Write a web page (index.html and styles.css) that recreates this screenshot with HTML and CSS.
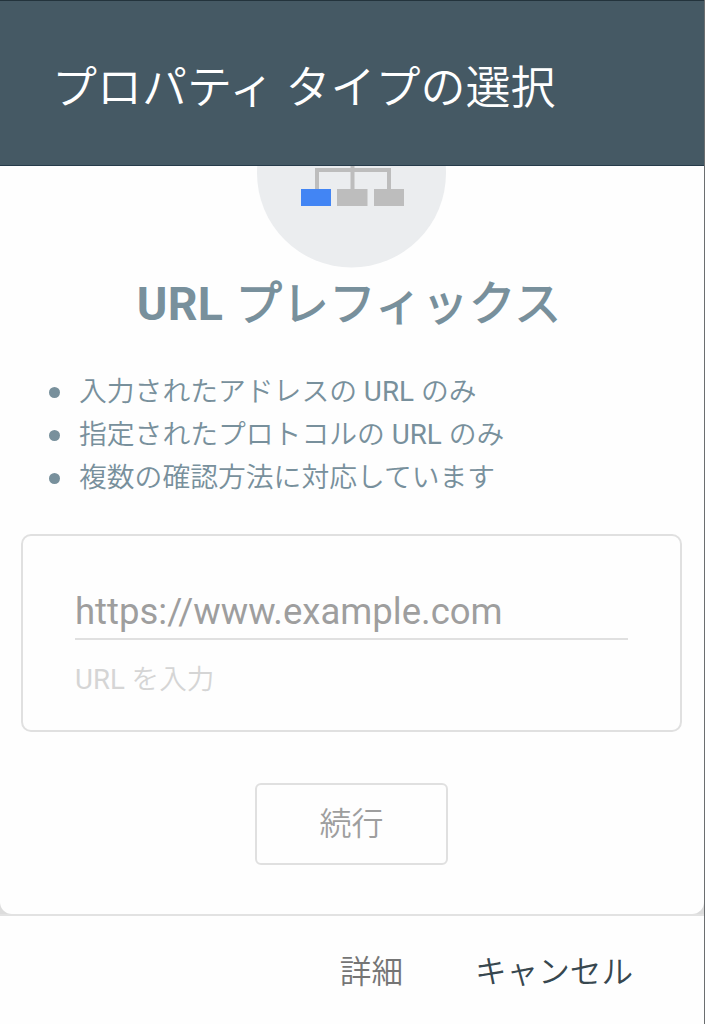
FILE: index.html
```html
<!DOCTYPE html>
<html lang="ja">
<head>
  <meta charset="UTF-8">
  <meta name="viewport" content="width=device-width, initial-scale=1">
  <title>プロパティ タイプの選択</title>
  <link rel="stylesheet" href="styles.css">
</head>

<body>
  <div class="dialog">
    <header class="header">
      <h1>プロパティ タイプの選択</h1>
    </header>

    <main class="content">
      <div class="card">
        <svg class="sitemap" viewBox="0 0 190 102" width="190" height="102">
          <circle cx="94.5" cy="7" r="94.5" fill="#ebedef"/>
          <path d="M60 23V4H132V23M95.500 0V23" fill="none" stroke="#bdbdbd" stroke-width="4"/>
          <rect x="44" y="23" width="30" height="17" fill="#4285f4"/>
          <rect x="80" y="23" width="30.500" height="17" fill="#bdbdbd"/>
          <rect x="117" y="23" width="30" height="17" fill="#bdbdbd"/>
        </svg>

        <h2>URL プレフィックス</h2>

        <ul class="points">
          <li>入力されたアドレスの URL のみ</li>
          <li>指定されたプロトコルの URL のみ</li>
          <li>複数の確認方法に対応しています</li>
        </ul>

        <div class="field">
          <input type="text" id="url" placeholder="https://www.example.com">
          <label for="url">URL を入力</label>
        </div>

        <button class="continue">続行</button>
      </div>
    </main>

    <footer class="footer">
      <a class="details">詳細</a>
      <a class="cancel">キャンセル</a>
    </footer>
  </div>
</body>
</html>
```
FILE: styles.css
```css
*{box-sizing:border-box;margin:0;padding:0;}

body{
  height:1024px;
  background:#6b6e70;
  font-family:Roboto,'Noto Sans CJK JP DemiLight','Noto Sans CJK JP',sans-serif;
  font-weight:400;
  overflow:hidden;
}

.dialog{
  display:flex;
  flex-direction:column;
  width:704px;
  height:1024px;
  background:#fefefe;
  border-top:1px solid #23333c;
}

/* ---------- Header ---------- */
.header{
  flex:none;
  height:165px;
  padding:54px 0 0 52px;
  background:#455964;
  border-bottom:1px solid #263b4a;
}

.header h1{
  font-size:45px;
  line-height:68px;
  font-weight:400;
  color:#fff;
}

/* ---------- Card ---------- */
.content{
  flex:none;
  height:750px;
  background:#dcdcdc;
  border-bottom:2px solid #e2e2e2;
}

.card{
  display:flex;
  flex-direction:column;
  align-items:center;
  height:748px;
  background:#fefefe;
  border-radius:0 0 12px 12px;
}

.sitemap{
  flex:none;
  display:block;
  margin-right:1px;
}

.card h2{
  margin:2px 6px 0 0;
  font-size:46.5px;
  line-height:68px;
  font-weight:700;
  letter-spacing:.4px;
  color:#78909c;
}

.points{
  align-self:stretch;
  margin-top:32px;
  padding-left:49px;
  list-style:none;
  font-size:27.8px;
  line-height:43px;
  color:#78909c;
}

.points li{
  display:flex;
  align-items:center;
}

.points li::before{
  content:'';
  width:11px;
  height:11px;
  margin:1px 19px 0 0;
  border-radius:50%;
  background:#78909c;
}

/* ---------- URL field ---------- */
.field{
  width:661px;
  height:198px;
  margin:35px 1px 0 0;
  padding:48px 52px 0;
  border:2px solid #e0e0e0;
  border-radius:10px;
}

.field input{
  display:block;
  width:100%;
  height:56px;
  border:none;
  border-bottom:2px solid #e0e0e0;
  outline:none;
  background:none;
  font:400 36.5px Roboto,sans-serif;
}

.field input::placeholder{color:#9e9e9e;}

.field label{
  display:block;
  margin-top:19px;
  font-size:27.6px;
  line-height:42px;
  color:#d5d5d5;
}

.continue{
  width:193px;
  height:82px;
  margin:51px 1px 0 0;
  padding-bottom:6px;
  border:2px solid #e0e0e0;
  border-radius:6px;
  background:none;
  font:400 32px Roboto,'Noto Sans CJK JP DemiLight','Noto Sans CJK JP',sans-serif;
  color:#9e9e9e;
}

/* ---------- Footer ---------- */
.footer{
  flex:1;
  display:flex;
  justify-content:flex-end;
  align-items:center;
  gap:72px;
  padding:0 71px 2px 0;
  font-size:31.6px;
}

.details{color:#757575;}
.cancel{color:#37474f;}
```
